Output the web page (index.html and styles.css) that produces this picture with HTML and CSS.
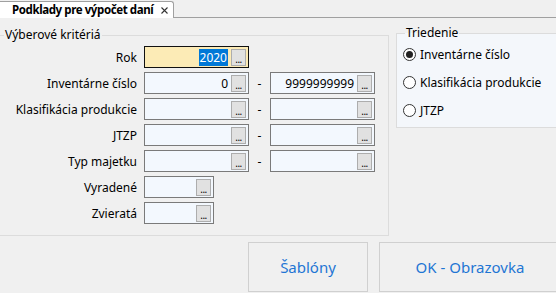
FILE: index.html
```html
<!DOCTYPE html>
<html lang="sk">
<head>
    <meta charset="UTF-8">
    <title>Podklady pre výpočet daní</title>
    <link rel="stylesheet" href="styles.css">
</head>
<body>
    <div class="tabs">
        <div class="tab">
            <span>Podklady pre výpočet daní</span>
            <svg class="close" width="7" height="7" viewBox="0 0 7 7">
                <path d="M0.5 0.5L6.5 6.5M6.5 0.5L0.5 6.5" stroke="#333" stroke-width="1.1" fill="none"/>
            </svg>
        </div>
    </div>

    <div class="main">
        <fieldset class="group criteria">
            <legend>Výberové kritériá</legend>
            <div class="form">
                <label>Rok</label>
                <div class="field focus"><span class="val"><span class="sel">2020</span></span><span class="pick">...</span></div>

                <label>Inventárne číslo</label>
                <div class="field"><span class="val">0</span><span class="pick">...</span></div>
                <span class="dash">-</span>
                <div class="field"><span class="val">9999999999</span><span class="pick">...</span></div>

                <label>Klasifikácia produkcie</label>
                <div class="field"><span class="pick">...</span></div>
                <span class="dash">-</span>
                <div class="field"><span class="pick">...</span></div>

                <label>JTZP</label>
                <div class="field"><span class="pick">...</span></div>
                <span class="dash">-</span>
                <div class="field"><span class="pick">...</span></div>

                <label>Typ majetku</label>
                <div class="field"><span class="pick">...</span></div>
                <span class="dash">-</span>
                <div class="field"><span class="pick">...</span></div>

                <label>Vyradené</label>
                <div class="field short"><span class="pick">...</span></div>

                <label>Zvieratá</label>
                <div class="field short"><span class="pick">...</span></div>
            </div>
        </fieldset>

        <fieldset class="group sort">
            <legend>Triedenie</legend>
            <div class="option"><span class="radio checked"></span>Inventárne číslo</div>
            <div class="option"><span class="radio"></span>Klasifikácia produkcie</div>
            <div class="option"><span class="radio"></span>JTZP</div>
        </fieldset>
    </div>

    <div class="actions">
        <button class="big-btn templates">Šablóny</button>
        <button class="big-btn ok">OK - Obrazovka</button>
    </div>
</body>
</html>
```

FILE: styles.css
```css
body {
    margin: 0;
    width: 556px;
    height: 293px;
    overflow: hidden;
    background: #f0f0f0;
    font-family: "Noto Sans", sans-serif;
    font-size: 12px;
    color: #000;
}

/* tab strip */
.tabs {
    height: 17px;
    border-bottom: 1px solid #a0a0a0;
    display: flex;
    align-items: flex-end;
}

.tab {
    box-sizing: border-box;
    height: 17px;
    margin: 0 0 -1px -3px;
    padding: 0 5px 0 14px;
    background: #fff;
    border: 1px solid #a0a0a0;
    border-bottom: none;
    border-radius: 3px 3px 0 0;
    display: flex;
    align-items: center;
    gap: 8px;
    font-weight: bold;
    font-size: 11.5px;
    letter-spacing: -0.4px;
    line-height: 14px;
}

/* group boxes */
.main {
    display: flex;
    align-items: flex-start;
}

.group {
    box-sizing: border-box;
    flex-shrink: 0;
    margin: 0;
    border: 1px solid #dcdcdc;
    min-width: 0;
}

.group legend {
    padding: 0 1px;
    line-height: 14px;
}

.criteria {
    width: 390px;
    margin: 10px 0 0 -1px;
    padding: 4px 0 11px 0;
}

.criteria legend {
    margin-left: 4px;
}

.sort {
    width: 170px;
    margin: 8px 0 0 7px;
    padding: 0 0 3px 6px;
    background: #f4f7fb;
}

.sort legend {
    margin-left: 2px;
}

/* criteria form */
.form {
    display: grid;
    grid-template-columns: 144px 105px 21px 105px;
    grid-auto-rows: 22px;
    row-gap: 4px;
    align-items: center;
}

.form label {
    grid-column: 1;
    text-align: right;
    padding-right: 7px;
}

.dash {
    text-align: center;
}

.field {
    box-sizing: border-box;
    height: 22px;
    border: 1px solid #7a7a7a;
    background: #f3f8fe;
    display: flex;
    align-items: center;
    justify-content: flex-end;
    padding-right: 2px;
}

.field.focus {
    border-color: #111;
    background: #fcebb6;
}

.field.short {
    width: 70px;
}

.val {
    margin-right: 3px;
    line-height: 15px;
}

.sel {
    background: #0078d7;
    color: #fff;
    padding: 0 1px;
}

.pick {
    box-sizing: border-box;
    width: 15px;
    height: 17px;
    border: 1px solid #adadad;
    background: #e1e1e1;
    font-size: 10px;
    line-height: 18px;
    text-align: center;
    letter-spacing: -0.5px;
}

/* sort options */
.option {
    height: 28px;
    display: flex;
    align-items: center;
    gap: 4px;
}

.radio {
    box-sizing: border-box;
    width: 13px;
    height: 13px;
    border: 1px solid #333;
    border-radius: 50%;
    background: #fff;
    display: flex;
    align-items: center;
    justify-content: center;
}

.radio.checked::after {
    content: "";
    width: 7px;
    height: 7px;
    border-radius: 50%;
    background: #222;
}

/* bottom buttons */
.actions {
    display: flex;
    gap: 11px;
    padding-left: 248px;
    margin-top: 6px;
}

.big-btn {
    flex-shrink: 0;
    height: 50px;
    background: #f0f0f0;
    border: 1px solid #d0d0d0;
    font-family: "Noto Sans", sans-serif;
    font-size: 15px;
    color: #1f76d4;
    padding: 0;
}

.templates {
    width: 120px;
}

.ok {
    width: 182px;
}
```
